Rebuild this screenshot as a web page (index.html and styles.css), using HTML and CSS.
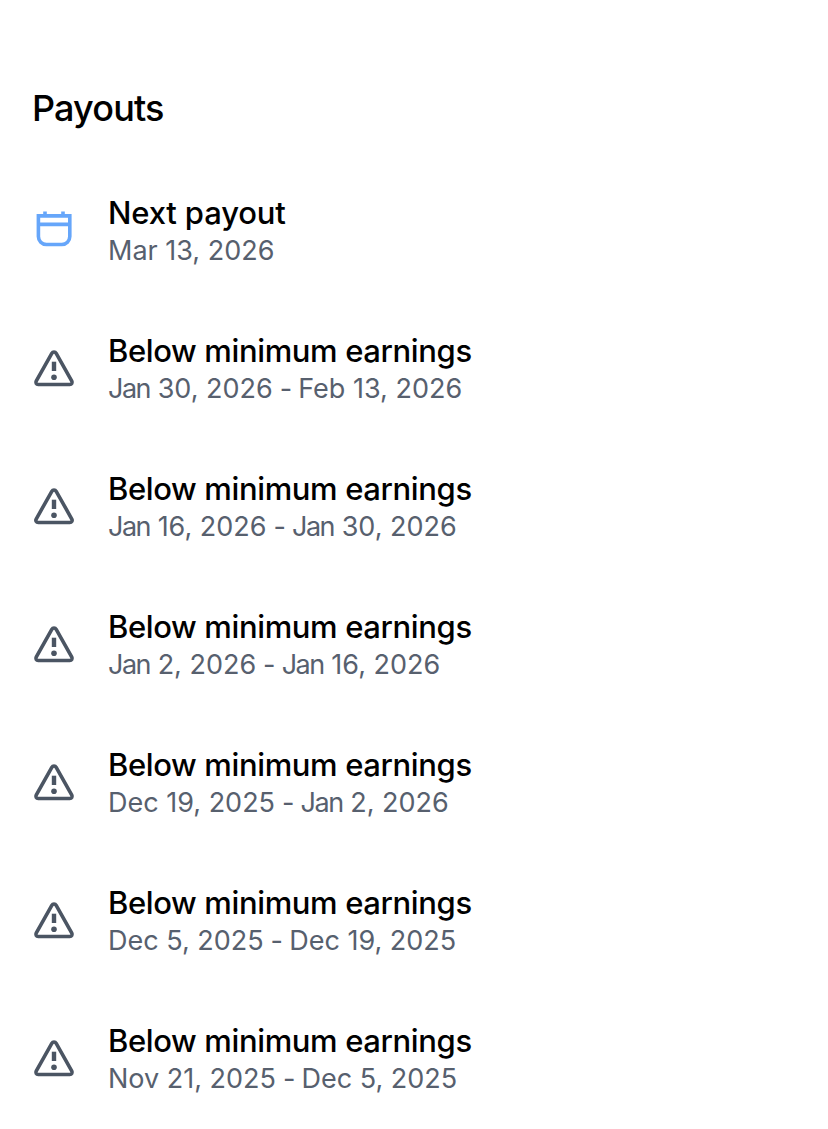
FILE: index.html
```html
<!DOCTYPE html>
<html lang="en">
<head>
  <meta charset="UTF-8">
  <meta name="viewport" content="width=device-width, initial-scale=1.0">
  <title>Payouts</title>
  <link rel="stylesheet" href="styles.css">
</head>
<body>
  <svg class="sprite">
    <symbol id="calendar" viewBox="0 0 42 42">
      <path d="M5.4 7.9h31.4v20.6a8 8 0 0 1-8 8H13.4a8 8 0 0 1-8-8zM5.4 16.4h31.4M12 3.4v4M30 3.4v4"/>
    </symbol>
    <symbol id="warning" viewBox="0 0 42 42">
      <path d="M18.8 7.300 3.200 35c-.9 1.700.1 3.500 2 3.500h31.600c1.900 0 2.900-1.800 2-3.500L23.200 7.300c-1-1.700-3.400-1.700-4.400 0z"/>
      <path class="mark" d="M21 15.700v9.300"/>
      <circle class="dot" cx="21" cy="31.300" r="2.800"/>
    </symbol>
  </svg>

  <main>
    <h1>Payouts</h1>
    <ul class="payouts">
      <li class="payout next">
        <svg class="icon"><use href="#calendar"/></svg>
        <div>
          <h2>Next payout</h2>
          <p>Mar 13, 2026</p>
        </div>
      </li>
      <li class="payout">
        <svg class="icon"><use href="#warning"/></svg>
        <div>
          <h2>Below minimum earnings</h2>
          <p><span class="jan">Jan</span> 30, 2026<span class="dash"> - </span>Feb 13, 2026</p>
        </div>
      </li>
      <li class="payout">
        <svg class="icon"><use href="#warning"/></svg>
        <div>
          <h2>Below minimum earnings</h2>
          <p><span class="jan">Jan</span> 16, 2026<span class="dash"> - </span><span class="jan">Jan</span> 30, 2026</p>
        </div>
      </li>
      <li class="payout">
        <svg class="icon"><use href="#warning"/></svg>
        <div>
          <h2>Below minimum earnings</h2>
          <p><span class="jan">Jan</span> 2, 2026<span class="dash"> - </span><span class="jan">Jan</span> 16, 2026</p>
        </div>
      </li>
      <li class="payout">
        <svg class="icon"><use href="#warning"/></svg>
        <div>
          <h2>Below minimum earnings</h2>
          <p>Dec 19, 2025<span class="dash"> - </span><span class="jan">Jan</span> 2, 2026</p>
        </div>
      </li>
      <li class="payout">
        <svg class="icon"><use href="#warning"/></svg>
        <div>
          <h2>Below minimum earnings</h2>
          <p>Dec 5, 2025<span class="dash"> - </span>Dec 19, 2025</p>
        </div>
      </li>
      <li class="payout">
        <svg class="icon"><use href="#warning"/></svg>
        <div>
          <h2>Below minimum earnings</h2>
          <p>Nov 21, 2025<span class="dash"> - </span>Dec 5, 2025</p>
        </div>
      </li>
    </ul>
  </main>
</body>
</html>
```
FILE: styles.css
```css
body {
  margin: 0;
  font-family: Inter, sans-serif;
  background: #fff;
  color: #000;
}

.sprite {
  display: none;
}

main {
  padding: 86px 33px 0;
}

h1, h2, p {
  margin: 0;
}

h1 {
  margin-left: -1px;
  font-size: 36px;
  line-height: 44px;
  font-weight: 550;
  letter-spacing: -0.85px;
}

.payouts {
  list-style: none;
  margin: 65px 0 0;
  padding: 0;
  display: grid;
  gap: 62px;
}

.payout {
  display: flex;
  gap: 33px;
  height: 76px;
}

.icon {
  width: 42px;
  height: 42px;
  margin-top: 13px;
  fill: none;
  stroke: #4b5563;
  stroke-width: 3.6;
}

.next .icon {
  stroke: #66a6fa;
}

.mark {
  stroke-width: 4.4;
}

.dot {
  fill: #4b5563;
  stroke: none;
}

h2 {
  font-size: 31px;
  line-height: 36px;
  padding-bottom: 2px;
  font-weight: 550;
  letter-spacing: -0.37px;
}

.next h2 {
  letter-spacing: -0.15px;
}

p {
  font-size: 27px;
  line-height: 36px;
  color: #57606e;
}

/* J sits tighter than Inter's default */
.jan {
  letter-spacing: -1.5px;
}

.dash {
  letter-spacing: -0.7px;
}
```
